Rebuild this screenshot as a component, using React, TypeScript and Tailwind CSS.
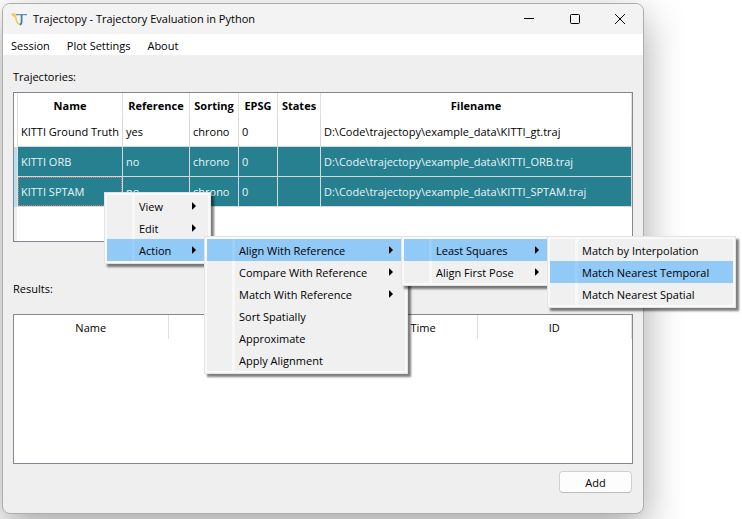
import type { ReactNode } from "react";

type MenuEntry = { label: string; active?: boolean; submenu?: ReactNode; arrow?: boolean };

function PopupMenu({ items, width }: { items: MenuEntry[]; width: string }) {
  return (
    <ul
      role="menu"
      className={`${width} border border-[#e3e3e3] bg-[#f9f9f9] p-[2px] shadow-[3px_3px_2px_rgba(0,0,0,0.5)]`}
    >
      {items.map((item) => (
        <li key={item.label} role="none" className="relative">
          <button
            type="button"
            role="menuitem"
            className={`flex h-[22px] w-full items-center pr-3 text-left ${
              item.active ? "bg-[#91c9f7]" : "bg-[#f0f0f0]"
            }`}
          >
            <span className={`ml-[25px] mr-1 h-full w-[3px] shrink-0 ${item.active ? "bg-white/10" : "bg-white/50"}`} />
            <span className="grow whitespace-nowrap pt-px">{item.label}</span>
            {(item.arrow || item.submenu) && (
              <svg viewBox="0 0 4 8" className="h-2 w-1 shrink-0" aria-hidden="true">
                <path d="M0 0.5 H0.5 L4 4 L0.5 7.5 H0 Z" fill="#000" />
              </svg>
            )}
          </button>
          {item.submenu && <div className="absolute -top-[3px] left-full z-10 -ml-1">{item.submenu}</div>}
        </li>
      ))}
    </ul>
  );
}

const matchMenu = (
  <PopupMenu
    width="w-[189px]"
    items={[
      { label: "Match by Interpolation" },
      { label: "Match Nearest Temporal", active: true },
      { label: "Match Nearest Spatial" },
    ]}
  />
);

const alignMenu = (
  <PopupMenu
    width="w-[153px]"
    items={[
      { label: "Least Squares", active: true, submenu: matchMenu },
      { label: "Align First Pose", arrow: true },
    ]}
  />
);

const actionMenu = (
  <PopupMenu
    width="w-[204px]"
    items={[
      { label: "Align With Reference", active: true, submenu: alignMenu },
      { label: "Compare With Reference", arrow: true },
      { label: "Match With Reference", arrow: true },
      { label: "Sort Spatially" },
      { label: "Approximate" },
      { label: "Apply Alignment" },
    ]}
  />
);

const trajectories = [
  { name: "KITTI Ground Truth", reference: "yes", file: "KITTI_gt.traj", selected: false },
  { name: "KITTI ORB", reference: "no", file: "KITTI_ORB.traj", selected: true },
  { name: "KITTI SPTAM", reference: "no", file: "KITTI_SPTAM.traj", selected: true, focused: true },
];

const headings = ["Name", "Reference", "Sorting", "EPSG", "States", "Filename"];

function TrajectoryTable() {
  return (
    <div className="h-[150px] overflow-hidden border border-[#828790] bg-white">
      <div className="flex h-full">
        <div className="flex w-[3px] shrink-0 flex-col">
          <div className="h-[54px]" />
          <div className="h-[60px] bg-[#bcdcf4]" />
          <div className="grow bg-[#efefef]" />
        </div>
        <table aria-labelledby="trajectories-label" className="w-full table-fixed border-separate border-spacing-0 self-start border-l border-[#e0e0e0]">
          <colgroup>
            <col className="w-[105px]" />
            <col className="w-[67px]" />
            <col className="w-[49px]" />
            <col className="w-[39px]" />
            <col className="w-[43px]" />
            <col />
          </colgroup>
          <thead>
            <tr className="h-6">
              {headings.map((h) => (
                <th key={h} className="border-r border-[#e0e0e0] p-0 pt-[2px] font-bold">
                  {h}
                </th>
              ))}
            </tr>
          </thead>
          <tbody>
            {trajectories.map((t) => {
              const cell = `h-[30px] whitespace-nowrap border-b border-r border-[#d8d8d8] p-0 ${
                t.selected ? "bg-[#26808f] text-[#e8f5f7]" : ""
              }`;
              return (
                <tr key={t.name}>
                  <td className={cell}>
                    <div
                      className={`flex h-[29px] items-center border border-dotted pl-[2px] ${
                        t.focused ? "border-[#d97f70]" : "border-transparent"
                      }`}
                    >
                      {t.name}
                    </div>
                  </td>
                  <td className={`${cell} pl-[3px]`}>{t.reference}</td>
                  <td className={`${cell} pl-[3px]`}>chrono</td>
                  <td className={`${cell} pl-[3px]`}>0</td>
                  <td className={cell} />
                  <td className={`${cell} pl-[3px]`}>{"D:\\Code\\trajectopy\\example_data\\" + t.file}</td>
                </tr>
              );
            })}
          </tbody>
        </table>
      </div>
    </div>
  );
}

function ResultsTable() {
  return (
    <div className="h-[150px] border border-[#828790] bg-white">
      <table aria-labelledby="results-label" className="w-full table-fixed border-separate border-spacing-0">
        <thead>
          <tr className="h-6">
            {["Name", "", "Creation Time", "ID"].map((h) => (
              <th key={h} className="border-r border-[#e0e0e0] p-0 pt-[2px] font-normal">
                {h}
              </th>
            ))}
          </tr>
        </thead>
      </table>
    </div>
  );
}

function TitleBar() {
  return (
    <header className="flex h-[30px] items-center bg-[#f3f3f3] pl-2">
      <svg viewBox="0 0 16 13" className="h-[13px] w-4 shrink-0" fill="none" aria-hidden="true">
        <path d="M5 1.7 H16" stroke="#5f93bd" strokeWidth="1.3" />
        <path d="M10.6 2 V8.5 Q10.6 11.4 8.6 11.6" stroke="#3f7fb4" strokeWidth="1.8" />
        <path d="M1.8 1.6 L4.6 4 L5.8 8.5 Q6.6 11 8.6 11.6" stroke="#f2c95c" strokeWidth="1.6" />
        <path d="M0 0.4 L4.5 0.6 L5 4.5 L1.2 3 Z" fill="#f5c85a" />
      </svg>
      <h1 className="ml-[6px] grow whitespace-nowrap">Trajectopy - Trajectory Evaluation in Python</h1>
      <div className="flex h-full">
        <button type="button" aria-label="Minimize" className="flex w-[46px] items-center justify-center">
          <svg viewBox="0 0 10 10" className="size-[10px]" stroke="#000">
            <path d="M0 4.5 H10" />
          </svg>
        </button>
        <button type="button" aria-label="Maximize" className="flex w-[45px] items-center justify-center">
          <svg viewBox="0 0 10 10" className="size-[10px]" stroke="#000" fill="none">
            <rect x="0.5" y="0.5" width="9" height="9" rx="1" />
          </svg>
        </button>
        <button type="button" aria-label="Close" className="flex w-[46px] items-center justify-center">
          <svg viewBox="0 0 10 10" className="size-[10px]" stroke="#000">
            <path d="M0 0 L10 10 M10 0 L0 10" />
          </svg>
        </button>
      </div>
    </header>
  );
}

export default function App() {
  return (
    <div className="relative min-h-screen overflow-hidden bg-white pb-1 pl-[2px] pr-[98px] pt-[3px] font-['Open_Sans','Noto_Sans',sans-serif] text-[11px] leading-4 text-black">
      <main className="overflow-hidden rounded-lg border border-[#adadad] bg-[#efefef] shadow-[0_14px_40px_rgba(0,0,0,0.36)]">
        <TitleBar />
        <nav className="flex h-[21px] items-center gap-[17px] bg-white px-2 pt-[2px]">
          <button type="button">Session</button>
          <button type="button">Plot Settings</button>
          <button type="button">About</button>
        </nav>
        <div className="px-[10px]">
          <h2 id="trajectories-label" className="pb-[7px] pt-[14px]">Trajectories:</h2>
          <TrajectoryTable />
          <h2 id="results-label" className="pb-[17px] pt-[39px]">Results:</h2>
          <ResultsTable />
          <div className="flex justify-end pb-5 pr-px pt-[7px]">
            <button type="button" className="h-[22px] w-[73px] rounded border border-[#d0d0d0] border-b-[#bcbcbc] bg-[#fdfdfd] pt-px">
              Add
            </button>
          </div>
        </div>
      </main>
      <div className="absolute left-[104px] top-[192px]">
        <PopupMenu
          width="w-[107px]"
          items={[
            { label: "View", arrow: true },
            { label: "Edit", arrow: true },
            { label: "Action", active: true, submenu: actionMenu },
          ]}
        />
      </div>
    </div>
  );
}
